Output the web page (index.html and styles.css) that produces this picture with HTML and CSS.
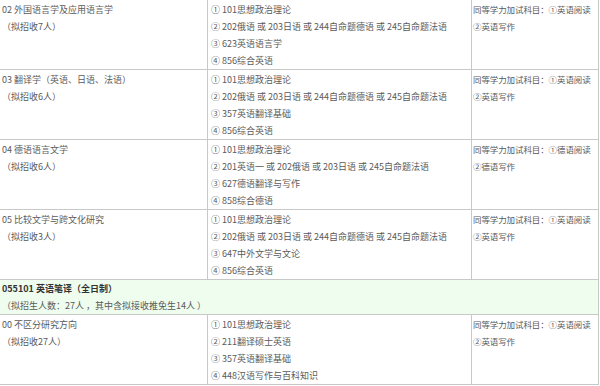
FILE: index.html
```html
<!DOCTYPE html>
<html lang="zh-CN">
<head>
<meta charset="utf-8">
<link rel="stylesheet" href="styles.css">
</head>
<body>
<table class="plan">
  <colgroup>
    <col class="c-dir">
    <col class="c-sub">
    <col class="c-add">
  </colgroup>
  <tr>
    <td class="dir"><div>02 外国语言学及应用语言学</div><div>（拟招收7人）</div></td>
    <td class="sub"><div>① 101思想政治理论</div><div>② 202俄语 或 203日语 或 244自命题德语 或 245自命题法语</div><div>③ 623英语语言学</div><div>④ 856综合英语</div></td>
    <td class="add"><div>同等学力加试科目：①英语阅读</div><div>②英语写作</div></td>
  </tr>
  <tr>
    <td class="dir"><div>03 翻译学（英语、日语、法语）</div><div>（拟招收6人）</div></td>
    <td class="sub"><div>① 101思想政治理论</div><div>② 202俄语 或 203日语 或 244自命题德语 或 245自命题法语</div><div>③ 357英语翻译基础</div><div>④ 856综合英语</div></td>
    <td class="add"><div>同等学力加试科目：①英语阅读</div><div>②英语写作</div></td>
  </tr>
  <tr>
    <td class="dir"><div>04 德语语言文学</div><div>（拟招收6人）</div></td>
    <td class="sub"><div>① 101思想政治理论</div><div>② 201英语一 或 202俄语 或 203日语 或 245自命题法语</div><div>③ 627德语翻译与写作</div><div>④ 858综合德语</div></td>
    <td class="add"><div>同等学力加试科目：①德语阅读</div><div>②德语写作</div></td>
  </tr>
  <tr>
    <td class="dir"><div>05 比较文学与跨文化研究</div><div>（拟招收3人）</div></td>
    <td class="sub"><div>① 101思想政治理论</div><div>② 202俄语 或 203日语 或 244自命题德语 或 245自命题法语</div><div>③ 647中外文学与文论</div><div>④ 856综合英语</div></td>
    <td class="add"><div>同等学力加试科目：①英语阅读</div><div>②英语写作</div></td>
  </tr>
  <tr class="major">
    <td colspan="3"><div class="major-name">055101 英语笔译（全日制）</div><div>（拟招生人数：27人 ，其中含拟接收推免生14人 ）</div></td>
  </tr>
  <tr>
    <td class="dir"><div>00 不区分研究方向</div><div>（拟招收27人）</div></td>
    <td class="sub"><div>① 101思想政治理论</div><div>② 211翻译硕士英语</div><div>③ 357英语翻译基础</div><div>④ 448汉语写作与百科知识</div></td>
    <td class="add"><div>同等学力加试科目：①英语阅读</div><div>②英语写作</div></td>
  </tr>
</table>
</body>
</html>
```

FILE: styles.css
```css
html, body {
  margin: 0;
  padding: 0;
  background: #ffffff;
}

body {
  font-family: "Noto Sans CJK SC", "Noto Sans", sans-serif;
  font-size: 9px;
  line-height: 17px;
  color: #5a5a5a;
}

.plan {
  border-collapse: collapse;
  table-layout: fixed;
  width: 599px;
  margin: -1px 0 0 -1px;
}

.c-dir { width: 208px; }
.c-sub { width: 264px; }
.c-add { width: 127px; }

.plan td {
  border: 1px solid #c8c8c8;
  vertical-align: top;
  padding: 1px 2px 0 2px;
  white-space: nowrap;
  overflow: hidden;
}

.plan td.dir {
  padding-left: 2px;
  height: 68px;
}

.plan td.sub {
  padding-left: 3px;
}

.plan td.add {
  padding-left: 1px;
  padding-right: 0;
  font-size: 8.5px;
  letter-spacing: -0.1px;
}

.major td {
  background: #effdef;
  padding: 0 2px 0 2px;
  height: 34px;
}

.major-name {
  font-weight: bold;
  color: #333333;
}
```
